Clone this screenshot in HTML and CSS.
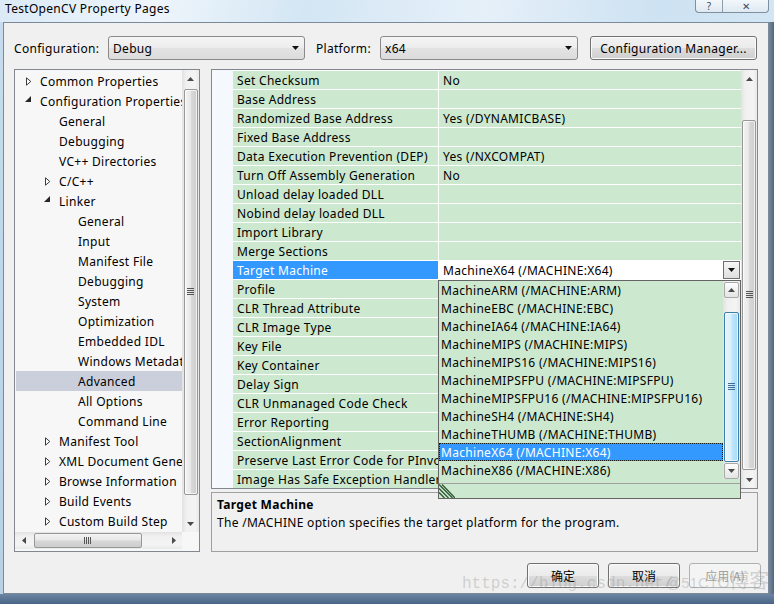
FILE: index.html
```html
<!DOCTYPE html>
<html lang="en">
<head>
<meta charset="utf-8">
<title>TestOpenCV Property Pages</title>
<link rel="stylesheet" href="styles.css">
</head>
<body>
<div class="screen">
  <div class="titlebar">
    <span class="title">TestOpenCV Property Pages</span>
    <div class="caption-btns">
      <span class="cbtn cbtn-help">?</span>
      <span class="cbtn cbtn-close">✕</span>
    </div>
  </div>
  <div class="frame-l"></div>
  <div class="client">
    <div class="toprow">
      <span class="lbl lbl-config">Configuration:</span>
      <div class="combo combo-config"><span>Debug</span><svg width="7" height="4" viewBox="0 0 7 4"><path d="M0 0H7L3.5 4Z" fill="#111"/></svg></div>
      <span class="lbl lbl-plat">Platform:</span>
      <div class="combo combo-plat"><span>x64</span><svg width="7" height="4" viewBox="0 0 7 4"><path d="M0 0H7L3.5 4Z" fill="#111"/></svg></div>
      <div class="btn btn-mgr">Configuration Manager...</div>
    </div>
    <div class="main">
      <div class="tree">
        <div class="tree-top">
          <div class="tree-list">
            <div class="trow l0"><span class="tw"><svg width="6" height="9" viewBox="0 0 6 9"><path d="M0.5 0.8L4.8 4.5L0.5 8.2Z" fill="#fff" stroke="#3c3c3c"/></svg></span><span>Common Properties</span></div>
            <div class="trow l0"><span class="tw"><svg class="exp" width="7" height="7" viewBox="0 0 7 7"><path d="M6 0V6H0Z" fill="#262626"/></svg></span><span>Configuration Properties</span></div>
            <div class="trow l1"><span class="tw"></span><span>General</span></div>
            <div class="trow l1"><span class="tw"></span><span>Debugging</span></div>
            <div class="trow l1"><span class="tw"></span><span>VC++ Directories</span></div>
            <div class="trow l1"><span class="tw"><svg width="6" height="9" viewBox="0 0 6 9"><path d="M0.5 0.8L4.8 4.5L0.5 8.2Z" fill="#fff" stroke="#3c3c3c"/></svg></span><span>C/C++</span></div>
            <div class="trow l1"><span class="tw"><svg class="exp" width="7" height="7" viewBox="0 0 7 7"><path d="M6 0V6H0Z" fill="#262626"/></svg></span><span>Linker</span></div>
            <div class="trow l2"><span class="tw"></span><span>General</span></div>
            <div class="trow l2"><span class="tw"></span><span>Input</span></div>
            <div class="trow l2"><span class="tw"></span><span>Manifest File</span></div>
            <div class="trow l2"><span class="tw"></span><span>Debugging</span></div>
            <div class="trow l2"><span class="tw"></span><span>System</span></div>
            <div class="trow l2"><span class="tw"></span><span>Optimization</span></div>
            <div class="trow l2"><span class="tw"></span><span>Embedded IDL</span></div>
            <div class="trow l2"><span class="tw"></span><span>Windows Metadata</span></div>
            <div class="trow l2 sel"><span class="tw"></span><span>Advanced</span></div>
            <div class="trow l2"><span class="tw"></span><span>All Options</span></div>
            <div class="trow l2"><span class="tw"></span><span>Command Line</span></div>
            <div class="trow l1"><span class="tw"><svg width="6" height="9" viewBox="0 0 6 9"><path d="M0.5 0.8L4.8 4.5L0.5 8.2Z" fill="#fff" stroke="#3c3c3c"/></svg></span><span>Manifest Tool</span></div>
            <div class="trow l1"><span class="tw"><svg width="6" height="9" viewBox="0 0 6 9"><path d="M0.5 0.8L4.8 4.5L0.5 8.2Z" fill="#fff" stroke="#3c3c3c"/></svg></span><span>XML Document Generator</span></div>
            <div class="trow l1"><span class="tw"><svg width="6" height="9" viewBox="0 0 6 9"><path d="M0.5 0.8L4.8 4.5L0.5 8.2Z" fill="#fff" stroke="#3c3c3c"/></svg></span><span>Browse Information</span></div>
            <div class="trow l1"><span class="tw"><svg width="6" height="9" viewBox="0 0 6 9"><path d="M0.5 0.8L4.8 4.5L0.5 8.2Z" fill="#fff" stroke="#3c3c3c"/></svg></span><span>Build Events</span></div>
            <div class="trow l1"><span class="tw"><svg width="6" height="9" viewBox="0 0 6 9"><path d="M0.5 0.8L4.8 4.5L0.5 8.2Z" fill="#fff" stroke="#3c3c3c"/></svg></span><span>Custom Build Step</span></div>
          </div>
          <div class="vscroll">
            <div class="sb-btn"><svg width="7" height="4" viewBox="0 0 7 4"><path d="M0 4L3.5 0L7 4Z" fill="#4a4a4a"/></svg></div>
            <div class="thumb tree-thumb"><svg width="7" height="8" viewBox="0 0 7 8"><path d="M0 0.5H7M0 2.5H7M0 4.5H7M0 6.5H7" stroke="#555"/></svg></div>
            <div class="sb-btn sb-down"><svg width="7" height="4" viewBox="0 0 7 4"><path d="M0 0H7L3.5 4Z" fill="#4a4a4a"/></svg></div>
          </div>
        </div>
        <div class="tree-bottom">
          <div class="hscroll">
            <div class="hsb-btn"><svg width="4" height="7" viewBox="0 0 4 7"><path d="M4 0L0 3.5L4 7Z" fill="#4a4a4a"/></svg></div>
            <div class="hthumb"><svg width="8" height="7" viewBox="0 0 8 7"><path d="M0.5 0V7M2.5 0V7M4.5 0V7M6.5 0V7" stroke="#555"/></svg></div>
            <div class="hsb-btn hsb-right"><svg width="4" height="7" viewBox="0 0 4 7"><path d="M0 0L4 3.5L0 7Z" fill="#4a4a4a"/></svg></div>
          </div>
        </div>
      </div>
      <div class="rightcol">
        <div class="grid">
          <div class="grid-margin"></div>
          <div class="grid-rows">
            <div class="grow"><div class="gname">Set Checksum</div><div class="gval">No</div></div>
            <div class="grow"><div class="gname">Base Address</div><div class="gval"></div></div>
            <div class="grow"><div class="gname">Randomized Base Address</div><div class="gval">Yes (/DYNAMICBASE)</div></div>
            <div class="grow"><div class="gname">Fixed Base Address</div><div class="gval"></div></div>
            <div class="grow"><div class="gname">Data Execution Prevention (DEP)</div><div class="gval">Yes (/NXCOMPAT)</div></div>
            <div class="grow"><div class="gname">Turn Off Assembly Generation</div><div class="gval">No</div></div>
            <div class="grow"><div class="gname">Unload delay loaded DLL</div><div class="gval"></div></div>
            <div class="grow"><div class="gname">Nobind delay loaded DLL</div><div class="gval"></div></div>
            <div class="grow"><div class="gname">Import Library</div><div class="gval"></div></div>
            <div class="grow"><div class="gname">Merge Sections</div><div class="gval"></div></div>
            <div class="grow gsel"><div class="gname">Target Machine</div><div class="gval gcombo"><span>MachineX64 (/MACHINE:X64)</span><div class="gcombo-btn"><svg width="7" height="4" viewBox="0 0 7 4"><path d="M0 0H7L3.5 4Z" fill="#111"/></svg></div></div></div>
            <div class="grow"><div class="gname">Profile</div><div class="gval"></div></div>
            <div class="grow"><div class="gname">CLR Thread Attribute</div><div class="gval"></div></div>
            <div class="grow"><div class="gname">CLR Image Type</div><div class="gval"></div></div>
            <div class="grow"><div class="gname">Key File</div><div class="gval"></div></div>
            <div class="grow"><div class="gname">Key Container</div><div class="gval"></div></div>
            <div class="grow"><div class="gname">Delay Sign</div><div class="gval"></div></div>
            <div class="grow"><div class="gname">CLR Unmanaged Code Check</div><div class="gval"></div></div>
            <div class="grow"><div class="gname">Error Reporting</div><div class="gval"></div></div>
            <div class="grow"><div class="gname">SectionAlignment</div><div class="gval"></div></div>
            <div class="grow"><div class="gname">Preserve Last Error Code for PInvoke Calls</div><div class="gval"></div></div>
            <div class="grow"><div class="gname">Image Has Safe Exception Handlers</div><div class="gval"></div></div>
          </div>
          <div class="vscroll grid-vs">
            <div class="sb-btn"><svg width="7" height="4" viewBox="0 0 7 4"><path d="M0 4L3.5 0L7 4Z" fill="#4a4a4a"/></svg></div>
            <div class="thumb grid-thumb"><svg width="7" height="8" viewBox="0 0 7 8"><path d="M0 0.5H7M0 2.5H7M0 4.5H7M0 6.5H7" stroke="#555"/></svg></div>
            <div class="sb-btn sb-down"><svg width="7" height="4" viewBox="0 0 7 4"><path d="M0 0H7L3.5 4Z" fill="#4a4a4a"/></svg></div>
          </div>
          <div class="dropdown">
            <div class="dd-body">
              <div class="dd-items">
                <div class="dd-item">MachineARM (/MACHINE:ARM)</div>
                <div class="dd-item">MachineEBC (/MACHINE:EBC)</div>
                <div class="dd-item">MachineIA64 (/MACHINE:IA64)</div>
                <div class="dd-item">MachineMIPS (/MACHINE:MIPS)</div>
                <div class="dd-item">MachineMIPS16 (/MACHINE:MIPS16)</div>
                <div class="dd-item">MachineMIPSFPU (/MACHINE:MIPSFPU)</div>
                <div class="dd-item">MachineMIPSFPU16 (/MACHINE:MIPSFPU16)</div>
                <div class="dd-item">MachineSH4 (/MACHINE:SH4)</div>
                <div class="dd-item">MachineTHUMB (/MACHINE:THUMB)</div>
                <div class="dd-item sel">MachineX64 (/MACHINE:X64)</div>
                <div class="dd-item">MachineX86 (/MACHINE:X86)</div>
              </div>
              <div class="vscroll dd-vs">
                <div class="sb-btn"><div class="sb-box"><svg width="7" height="4" viewBox="0 0 7 4"><path d="M0 4L3.5 0L7 4Z" fill="#4a4a4a"/></svg></div></div>
                <div class="thumb dd-thumb"><svg width="7" height="8" viewBox="0 0 7 8"><path d="M0 0.5H7M0 2.5H7M0 4.5H7M0 6.5H7" stroke="#3f6f96"/></svg></div>
                <div class="sb-btn sb-down"><div class="sb-box"><svg width="7" height="4" viewBox="0 0 7 4"><path d="M0 0H7L3.5 4Z" fill="#4a4a4a"/></svg></div></div>
              </div>
            </div>
            <div class="dd-foot">
              <svg width="16" height="14" viewBox="0 0 16 14"><path d="M0 0.5L13.5 14M0 4.5L9.5 14M0 8.5L5.5 14M3 0.5L16 14" stroke="#2f5a33" stroke-width="1.3" fill="none"/></svg>
            </div>
          </div>
        </div>
        <div class="desc">
          <div class="desc-title">Target Machine</div>
          <div class="desc-text">The /MACHINE option specifies the target platform for the program.</div>
        </div>
      </div>
    </div>
    <div class="btnrow">
      <div class="btn btn-dlg">确定</div>
      <div class="btn btn-dlg">取消</div>
      <div class="btn btn-dlg btn-disabled">应用(A)</div>
    </div>
  </div>
  <div class="frame-r"></div>
  <div class="frame-b"></div>
  <div class="wm wm-url">https://blog.csdn.net/</div>
  <div class="wm wm-tag"><span class="wm-lat">@51CTO</span>博客</div>
</div>
</body>
</html>
```
FILE: styles.css
```css
* { box-sizing: border-box; }
html, body { margin: 0; padding: 0; }
body {
  width: 774px; height: 604px; overflow: hidden;
  font-family: "Noto Sans", "Noto Sans CJK SC", sans-serif;
  font-size: 12px; color: #000; background: #cfe3f2;
}
.screen {
  position: relative; width: 774px; height: 604px;
  display: grid;
  grid-template-columns: 3px 766px 5px;
  grid-template-rows: 22px 572px 10px;
  background: linear-gradient(100deg, #dbeaf6 0%, #eef5fb 18%, #d3e6f4 35%, #e6f0f9 55%, #cde2f2 75%, #d9e9f5 100%);
}
.titlebar {
  grid-column: 1 / 4; grid-row: 1; position: relative;
  padding-left: 5px; line-height: 18px; letter-spacing: 0.3px;
}
.caption-btns {
  position: absolute; top: -1px; right: 5px; width: 74px; height: 14px;
  display: flex; border: 1px solid #7f8fa0; border-top: none;
  border-radius: 0 0 4px 4px;
  background: linear-gradient(#f4f8fb, #dfe9f2);
}
.cbtn { display: flex; align-items: center; justify-content: center; font-size: 10px; color: #3a4a5a; line-height: 12px; letter-spacing: 0; }
.cbtn-help { width: 27px; border-right: 1px solid #8d9cab; }
.cbtn-close { flex: 1; }
.frame-l { grid-column: 1; grid-row: 2; background: linear-gradient(#c6dcee, #b6d0e6); }
.frame-r { grid-column: 3; grid-row: 2; background: linear-gradient(to right, #76889b, #53677d); }
.frame-b { grid-column: 1 / 4; grid-row: 3; background: linear-gradient(#6b85a3, #4b6586); }
.client {
  grid-column: 2; grid-row: 2;
  background: #f0f0f0; border: 1px solid #7b8a99;
  padding: 13px 7px 0 10px;
  display: flex; flex-direction: column;
  letter-spacing: 0.3px;
}
.toprow { display: flex; align-items: center; height: 24px; }
.lbl-config { width: 94px; }
.lbl-plat { width: 64px; margin-left: 11px; }
.combo {
  height: 24px; display: flex; align-items: center; justify-content: space-between;
  padding: 0 5px 0 4px; border: 1px solid #8a8a8a; border-radius: 3px;
  background: linear-gradient(#f5f5f5, #ececec 50%, #e3e3e3 51%, #dcdcdc);
}
.combo-config { width: 197px; }
.combo-plat { width: 198px; }
.btn {
  display: flex; align-items: center; justify-content: center;
  border: 1px solid #707070; border-radius: 3px;
  background: linear-gradient(#f2f2f2, #ebebeb 50%, #dddddd 51%, #cfcfcf);
  box-shadow: inset 0 0 0 1px #fbfbfb;
}
.btn-mgr { width: 167px; height: 24px; margin-left: 12px; }
.main { display: flex; gap: 11px; margin-top: 9px; width: 744px; }
.tree {
  width: 186px; height: 483px; border: 1px solid #828790; background: #f7f7f7;
  display: flex; flex-direction: column;
}
.tree-top { height: 462px; display: flex; }
.tree-list { width: 167px; flex: none; padding: 1px 0 0 1px; overflow: hidden; }
.trow { height: 20px; width: 166px; display: flex; align-items: center; white-space: nowrap; }
.trow.sel { background: #cbcfdc; }
.l0 { padding-left: 10px; }
.l1 { padding-left: 29px; }
.l2 { padding-left: 48px; }
.tw { width: 14px; flex: none; display: flex; align-items: center; }
.tw .exp { margin-left: -1px; margin-top: -3px; }
.vscroll {
  width: 17px; flex: none; display: flex; flex-direction: column; align-items: center;
  background: linear-gradient(to right, #e2e2e2, #f0f0f0 25%, #f4f4f4 75%, #e9e9e9);
}
.sb-btn { width: 100%; height: 17px; flex: none; display: flex; align-items: center; justify-content: center; }
.sb-down { margin-top: auto; }
.thumb {
  width: 14px; flex: none; border: 1px solid #979797; border-radius: 2px;
  background: linear-gradient(to right, #f3f3f3, #e8e8e8 45%, #d7d7d7 55%, #cdcdcd);
  box-shadow: inset 0 0 0 1px rgba(255,255,255,0.7);
  display: flex; align-items: center; justify-content: center;
}
.tree-thumb { margin-top: 2px; height: 406px; }
.tree-bottom { display: flex; height: 19px; }
.hscroll {
  width: 167px; height: 17px; display: flex; align-items: center;
  background: linear-gradient(#e2e2e2, #f0f0f0 25%, #f4f4f4 75%, #e9e9e9);
}
.hsb-btn { width: 17px; height: 17px; flex: none; display: flex; align-items: center; justify-content: center; }
.hsb-right { margin-left: auto; }
.hthumb {
  width: 108px; height: 15px; margin-left: 2px; border: 1px solid #979797; border-radius: 2px;
  background: linear-gradient(#f3f3f3, #e8e8e8 45%, #d7d7d7 55%, #cdcdcd);
  display: flex; align-items: center; justify-content: center;
}
.rightcol { width: 547px; display: flex; flex-direction: column; }
.grid {
  position: relative; height: 420px; border: 1px solid #828790;
  display: flex; background: #f5f8fc;
}
.grid-margin { width: 21px; flex: none; }
.grid-rows { width: 508px; flex: none; padding-top: 1px; background: #fff; overflow: hidden; }
.grow { display: flex; height: 19px; border-bottom: 1px solid #fff; background: #cce8cf; }
.gname {
  width: 206px; flex: none; border-right: 1px solid #fff; padding: 1px 0 0 4px;
  line-height: 17px; white-space: nowrap; overflow: hidden;
}
.gval { flex: 1; padding: 1px 0 0 4px; line-height: 17px; white-space: nowrap; overflow: hidden; }
.gsel .gname { background: #3399ff; color: #fff; }
.gcombo { background: #fff; display: flex; align-items: center; justify-content: space-between; padding: 0 1px 0 4px; }
.gcombo span { padding-top: 1px; }
.gcombo-btn {
  width: 17px; height: 18px; border: 1px solid #6f6f6f;
  background: linear-gradient(#f6f6f6, #dedede);
  display: flex; align-items: center; justify-content: center;
}
.grid-vs { width: 16px; }
.grid-thumb { margin-top: 33px; height: 350px; }
.dropdown {
  position: absolute; left: 226px; top: 210px; width: 303px; height: 219px;
  border: 1px solid #646464; background: #cce8cf;
  display: flex; flex-direction: column;
}
.dd-body { height: 202px; display: flex; flex: none; }
.dd-items { width: 284px; flex: none; }
.dd-item { height: 18px; line-height: 17px; padding: 1px 0 0 2px; white-space: nowrap; }
.dd-item.sel { background: #3399ff; color: #fff; outline: 1px dotted #1a1a1a; outline-offset: -1px; }
.dd-vs { height: 198px; }
.sb-box {
  width: 15px; height: 16px; border: 1px solid #a9a9a9; border-radius: 2px;
  background: linear-gradient(#fdfdfd, #e4e4e4);
  display: flex; align-items: center; justify-content: center;
}
.dd-thumb {
  margin-top: 14px; height: 150px; width: 15px; border-color: #3c7fb1;
  background: linear-gradient(to right, #eaf6fd, #d9f0fc 45%, #bee6fd 55%, #a7d9f5);
}
.dd-foot { flex: 1; border-top: 1px solid #a0a0a0; display: flex; align-items: flex-end; }
.desc { margin-top: 3px; height: 60px; border: 1px solid #a0a0a0; padding: 3px 0 0 5px; }
.desc-title { font-weight: bold; line-height: 18px; }
.desc-text { line-height: 18px; }
.btnrow { display: flex; justify-content: flex-end; gap: 9px; margin-top: 11px; }
.btn-dlg { width: 72px; height: 25px; font-family: "Noto Sans CJK SC", sans-serif; letter-spacing: 0; }
.btn-disabled { color: #a0a0a0; border-color: #adb2b5; background: #f4f4f4; box-shadow: none; }
.wm { position: absolute; color: rgba(150, 150, 150, 0.38); white-space: nowrap; pointer-events: none; }
.wm-url { left: 462px; top: 574px; font-family: "Liberation Mono", monospace; font-size: 16px; line-height: 20px; }
.wm-tag { left: 666px; top: 569px; font-family: "Noto Sans CJK SC", sans-serif; font-size: 20px; line-height: 22px; }
.wm-lat { font-family: "Liberation Sans", sans-serif; font-size: 15px; }
```
